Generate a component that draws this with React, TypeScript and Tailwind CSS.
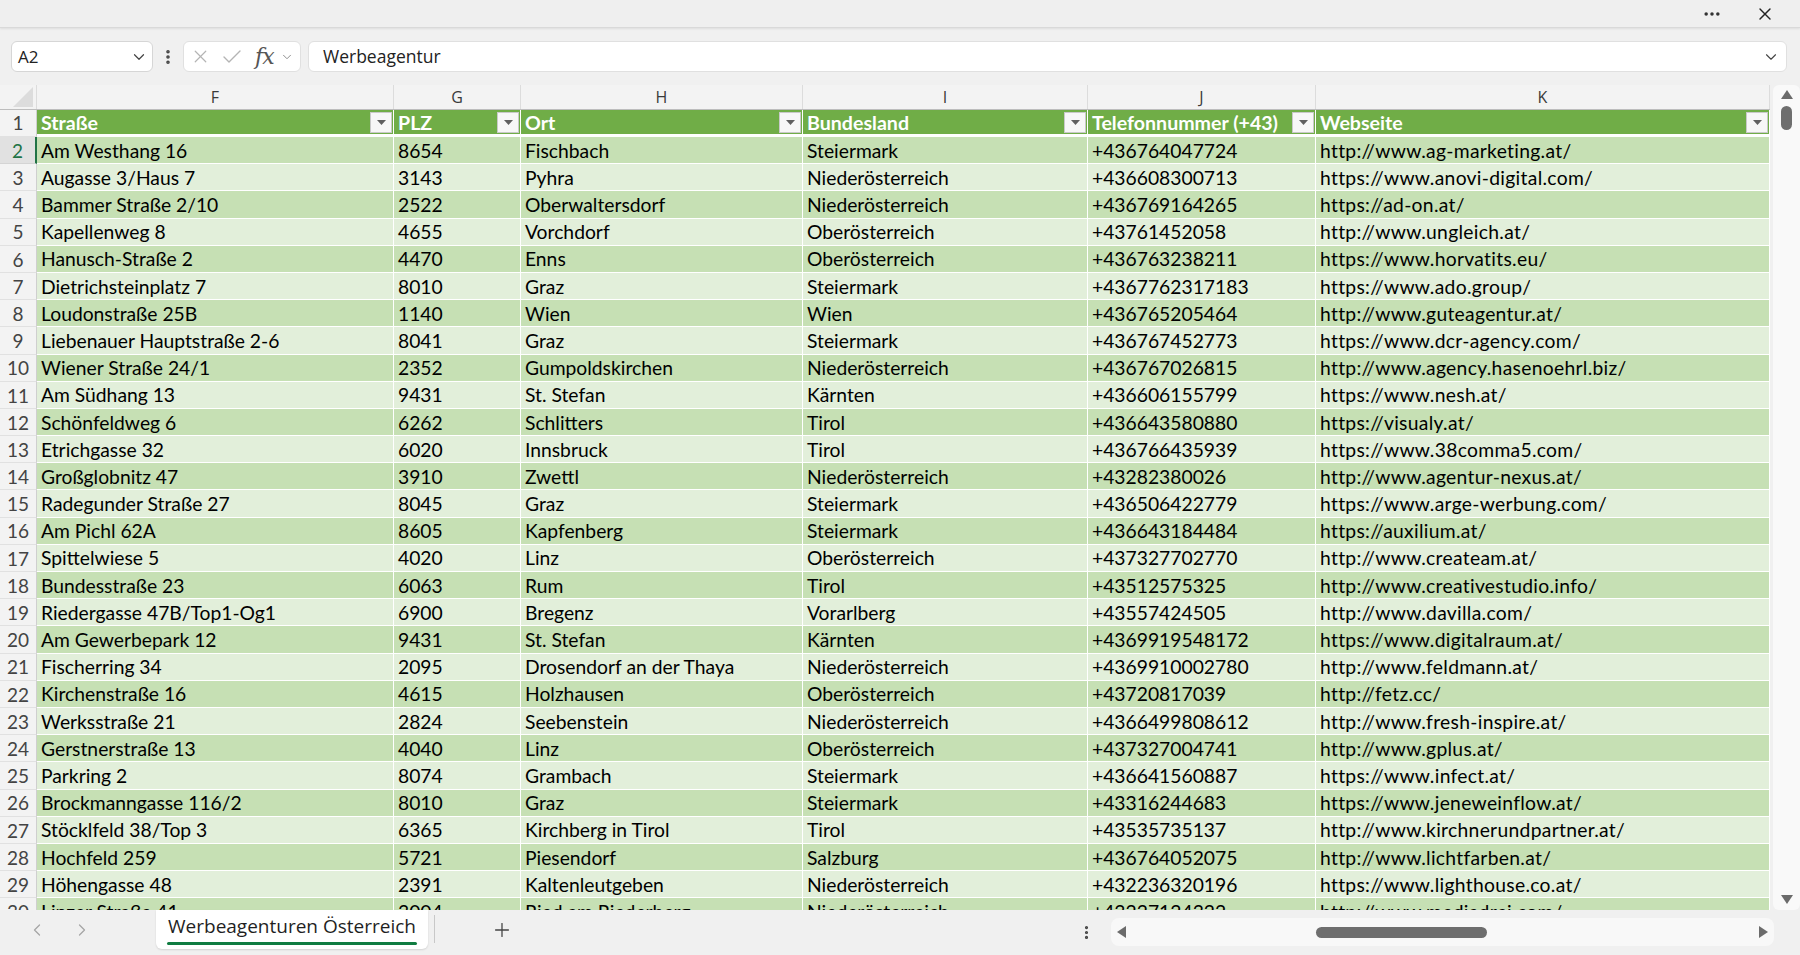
import React from "react";
import {
  X,
  Check,
  ChevronDown,
  ChevronLeft,
  ChevronRight,
  Plus,
  Ellipsis,
  EllipsisVertical,
} from "lucide-react";

const rows: string[][] = [
  ["Am Westhang 16", "8654", "Fischbach", "Steiermark", "+436764047724", "http://www.ag-marketing.at/"],
  ["Augasse 3/Haus 7", "3143", "Pyhra", "Niederösterreich", "+436608300713", "https://www.anovi-digital.com/"],
  ["Bammer Straße 2/10", "2522", "Oberwaltersdorf", "Niederösterreich", "+436769164265", "https://ad-on.at/"],
  ["Kapellenweg 8", "4655", "Vorchdorf", "Oberösterreich", "+43761452058", "http://www.ungleich.at/"],
  ["Hanusch-Straße 2", "4470", "Enns", "Oberösterreich", "+436763238211", "https://www.horvatits.eu/"],
  ["Dietrichsteinplatz 7", "8010", "Graz", "Steiermark", "+4367762317183", "https://www.ado.group/"],
  ["Loudonstraße 25B", "1140", "Wien", "Wien", "+436765205464", "http://www.guteagentur.at/"],
  ["Liebenauer Hauptstraße 2-6", "8041", "Graz", "Steiermark", "+436767452773", "https://www.dcr-agency.com/"],
  ["Wiener Straße 24/1", "2352", "Gumpoldskirchen", "Niederösterreich", "+436767026815", "http://www.agency.hasenoehrl.biz/"],
  ["Am Südhang 13", "9431", "St. Stefan", "Kärnten", "+436606155799", "https://www.nesh.at/"],
  ["Schönfeldweg 6", "6262", "Schlitters", "Tirol", "+436643580880", "https://visualy.at/"],
  ["Etrichgasse 32", "6020", "Innsbruck", "Tirol", "+436766435939", "https://www.38comma5.com/"],
  ["Großglobnitz 47", "3910", "Zwettl", "Niederösterreich", "+43282380026", "http://www.agentur-nexus.at/"],
  ["Radegunder Straße 27", "8045", "Graz", "Steiermark", "+436506422779", "https://www.arge-werbung.com/"],
  ["Am Pichl 62A", "8605", "Kapfenberg", "Steiermark", "+436643184484", "https://auxilium.at/"],
  ["Spittelwiese 5", "4020", "Linz", "Oberösterreich", "+437327702770", "http://www.createam.at/"],
  ["Bundesstraße 23", "6063", "Rum", "Tirol", "+43512575325", "http://www.creativestudio.info/"],
  ["Riedergasse 47B/Top1-Og1", "6900", "Bregenz", "Vorarlberg", "+43557424505", "http://www.davilla.com/"],
  ["Am Gewerbepark 12", "9431", "St. Stefan", "Kärnten", "+4369919548172", "https://www.digitalraum.at/"],
  ["Fischerring 34", "2095", "Drosendorf an der Thaya", "Niederösterreich", "+4369910002780", "http://www.feldmann.at/"],
  ["Kirchenstraße 16", "4615", "Holzhausen", "Oberösterreich", "+43720817039", "http://fetz.cc/"],
  ["Werksstraße 21", "2824", "Seebenstein", "Niederösterreich", "+4366499808612", "http://www.fresh-inspire.at/"],
  ["Gerstnerstraße 13", "4040", "Linz", "Oberösterreich", "+437327004741", "http://www.gplus.at/"],
  ["Parkring 2", "8074", "Grambach", "Steiermark", "+436641560887", "https://www.infect.at/"],
  ["Brockmanngasse 116/2", "8010", "Graz", "Steiermark", "+43316244683", "https://www.jeneweinflow.at/"],
  ["Stöcklfeld 38/Top 3", "6365", "Kirchberg in Tirol", "Tirol", "+43535735137", "http://www.kirchnerundpartner.at/"],
  ["Hochfeld 259", "5721", "Piesendorf", "Salzburg", "+436764052075", "http://www.lichtfarben.at/"],
  ["Höhengasse 48", "2391", "Kaltenleutgeben", "Niederösterreich", "+432236320196", "https://www.lighthouse.co.at/"],
  ["Linzer Straße 41", "3004", "Ried am Riederberg", "Niederösterreich", "+43227124322", "http://www.mediadrei.com/"],
];

// widths of F..K
const cols = [
  { letter: "F", title: "Straße", w: "w-[357px]" },
  { letter: "G", title: "PLZ", w: "w-[127px]" },
  { letter: "H", title: "Ort", w: "w-[282px]" },
  { letter: "I", title: "Bundesland", w: "w-[285px]" },
  { letter: "J", title: "Telefonnummer (+43)", w: "w-[228px]" },
  { letter: "K", title: "Webseite", w: "w-[454px]" },
];

const FilterButton = () => (
  <div className="absolute right-[1px] top-[2px] w-[22px] h-[21px] bg-[#f7f7f7] border border-[#c9c9c9] flex items-center justify-center">
    <svg width="9" height="5" viewBox="0 0 9 5">
      <polygon points="0,0 9,0 4.5,5" fill="#606060" />
    </svg>
  </div>
);

const Triangle = ({ dir }: { dir: "up" | "down" | "left" | "right" }) => {
  const pts = {
    up: "0,9 12,9 6,0",
    down: "0,0 12,0 6,9",
    left: "9,0 9,12 0,6",
    right: "0,0 0,12 9,6",
  }[dir];
  const vertical = dir === "up" || dir === "down";
  return (
    <svg width={vertical ? 12 : 9} height={vertical ? 9 : 12} viewBox={vertical ? "0 0 12 9" : "0 0 9 12"}>
      <polygon points={pts} fill="#6b6b6b" strokeLinejoin="round" />
    </svg>
  );
};

export default function App() {
  return (
    <div className="w-[1800px] h-[955px] bg-[#f0f0f0] flex flex-col overflow-hidden font-['Open_Sans',sans-serif] text-[#222]">
      {/* title bar */}
      <div className="h-[28px] shrink-0 flex items-center justify-end pr-[25px] gap-[33px] border-b border-[#d9d9d9] shadow-[0_1px_2px_rgba(0,0,0,0.08)] bg-[#efefef]">
        <Ellipsis size={20} strokeWidth={2.2} className="text-[#333]" />
        <X size={20} strokeWidth={1.7} className="text-[#222]" />
      </div>

      {/* formula bar */}
      <div className="h-[57px] shrink-0 flex items-center px-[11px]">
        <div className="w-[142px] h-[31px] bg-white border border-[#d6d6d6] rounded-[6px] flex items-center justify-between pl-[6px] pr-[4px]">
          <span className="text-[17px]">A2</span>
          <ChevronDown size={18} strokeWidth={1.6} className="text-[#444]" />
        </div>
        <div className="w-[30px] flex justify-center">
          <EllipsisVertical size={18} strokeWidth={2.8} className="text-[#444]" />
        </div>
        <div className="w-[118px] h-[31px] bg-white border border-[#e0e0e0] rounded-[6px] flex items-center pl-[6px] text-[#b4b4b4]">
          <X size={21} strokeWidth={1.4} />
          <Check size={24} strokeWidth={1.4} className="ml-[9px]" />
          <span className="ml-[11px] text-[#555] font-['DejaVu_Serif',serif] italic text-[22px] leading-none tracking-[-1px]">fx</span>
          <ChevronDown size={14} strokeWidth={1.6} className="ml-[6px] text-[#888]" />
        </div>
        <div className="ml-[7px] w-[1479px] h-[31px] bg-white border border-[#e0e0e0] rounded-[6px] flex items-center justify-between pl-[14px] pr-[6px]">
          <span className="text-[17.5px]">Werbeagentur</span>
          <ChevronDown size={18} strokeWidth={1.5} className="text-[#444]" />
        </div>
      </div>

      {/* grid area */}
      <div className="flex-1 flex min-h-0">
        <div className="w-[1770px] shrink-0 overflow-hidden flex flex-col">
          {/* column letters */}
          <div className="h-[25px] shrink-0 flex border-b border-[#bdbdbd] bg-[#f3f3f3]">
            <div className="w-[37px] relative border-r border-[#dcdcdc]">
              <svg className="absolute right-[3px] bottom-[2px]" width="20" height="20" viewBox="0 0 20 20">
                <polygon points="20,0 20,20 0,20" fill="#dcdcdc" />
              </svg>
            </div>
            {cols.map((c) => (
              <div key={c.letter} className={`${c.w} flex items-center justify-center border-r border-[#dcdcdc] text-[16px] text-[#3a3a3a]`}>
                {c.letter}
              </div>
            ))}
          </div>
          {/* header row */}
          <div className="h-[27px] shrink-0 flex font-['Lato',sans-serif]">
            <div className="w-[37px] flex items-center justify-center bg-[#f3f3f3] border-r border-[#cfcfcf] border-b border-b-[#e1e1e1] text-[19px] text-[#444]">
              1
            </div>
            {cols.map((c) => (
              <div key={c.letter} className={`${c.w} relative flex items-center pl-[4px] pt-[1px] bg-[#70ad47] border-r border-white border-b-[3px] border-b-white text-white font-bold text-[19.6px]`}>
                {c.title}
                <FilterButton />
              </div>
            ))}
          </div>
          {/* data rows */}
          {rows.map((r, i) => {
            const n = i + 2;
            const selected = n === 2;
            return (
              <div key={n} className="h-[27.2px] shrink-0 flex font-['Lato',sans-serif] text-[19.3px] text-black">
                <div
                  className={
                    selected
                      ? "w-[37px] flex items-center justify-center pt-[2px] bg-[#e1e1e1] border-r-2 border-[#217346] border-b border-b-[#d4d4d4] text-[19px] text-[#217346]"
                      : "w-[37px] flex items-center justify-center pt-[2px] bg-[#f3f3f3] border-r border-[#cfcfcf] border-b border-b-[#e1e1e1] text-[19px] text-[#444]"
                  }
                >
                  {n}
                </div>
                {r.map((v, j) => (
                  <div
                    key={j}
                    className={`${cols[j].w} flex items-center pl-[4px] pt-[2px] whitespace-nowrap overflow-hidden border-r border-b border-white ${
                      j === 5 ? "tracking-[0.3px]" : ""
                    } ${i % 2 === 0 ? "bg-[#c6e0b4]" : "bg-[#e2efda]"}`}
                  >
                    {v}
                  </div>
                ))}
              </div>
            );
          })}
        </div>
        {/* vertical scrollbar */}
        <div className="ml-[3px] w-[27px] bg-[#f9f9f9] rounded-[6px] flex flex-col items-center pt-[5px] pb-[6px]">
          <Triangle dir="up" />
          <div className="mt-[7px] w-[11px] h-[24px] rounded-full bg-[#6e6e6e]" />
          <div className="flex-1" />
          <Triangle dir="down" />
        </div>
      </div>

      {/* sheet tabs */}
      <div className="h-[45px] shrink-0 flex items-start">
        <div className="h-[39px] flex items-center">
          <ChevronLeft size={20} strokeWidth={1.5} className="ml-[27px] text-[#a6a6a6]" />
          <ChevronRight size={20} strokeWidth={1.5} className="ml-[25px] text-[#a6a6a6]" />
        </div>
        <div className="ml-[64px] w-[272px] h-[39px] bg-white rounded-b-[6px] shadow-[0_1px_2px_rgba(0,0,0,0.12)] flex flex-col items-center justify-end">
          <span className="text-[19px] text-[#1f1f1f] leading-[24px]">Werbeagenturen Österreich</span>
          <div className="mt-[4px] mb-[4px] w-[250px] h-[3px] bg-[#107c41] rounded-full" />
        </div>
        <div className="ml-[6px] mt-[5px] w-px h-[28px] bg-[#c8c8c8]" />
        <div className="h-[39px] flex items-center">
          <Plus size={22} strokeWidth={1.4} className="ml-[56px] text-[#444]" />
        </div>
        <div className="h-[45px] flex items-center">
          <EllipsisVertical size={17} strokeWidth={2.5} className="ml-[565px] text-[#444]" />
        </div>
        <div className="ml-[16px] mt-[8px] w-[663px] h-[28px] bg-[#f8f8f8] rounded-[8px] flex items-center pl-[6px] pr-[6px]">
          <Triangle dir="left" />
          <div className="ml-[190px] w-[171px] h-[11px] rounded-full bg-[#6e6e6e]" />
          <div className="flex-1" />
          <Triangle dir="right" />
        </div>
      </div>
    </div>
  );
}
